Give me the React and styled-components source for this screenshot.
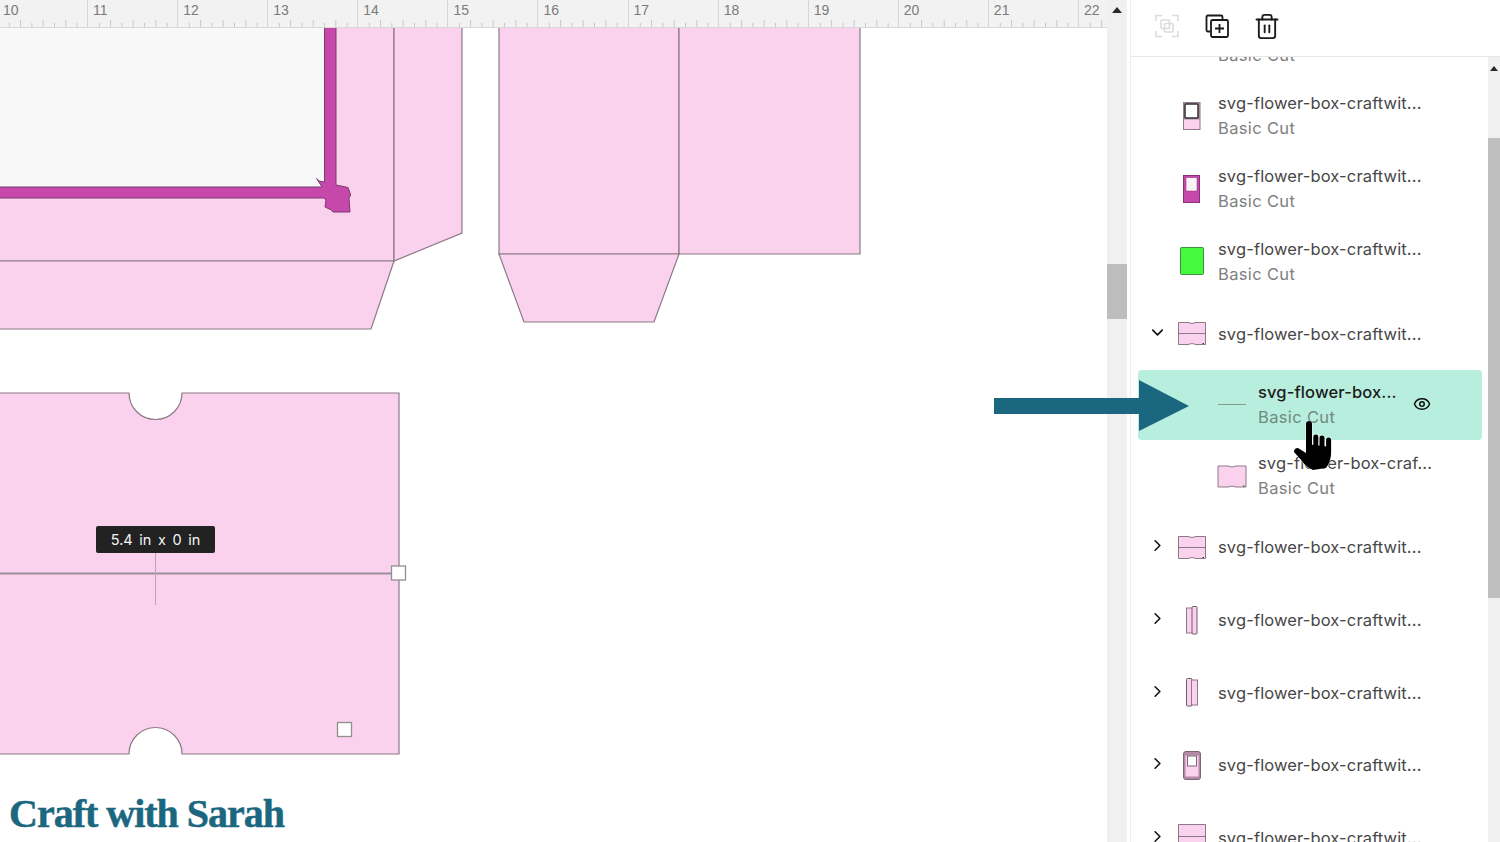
import React from 'react';
import styled, { createGlobalStyle } from 'styled-components';
import { ChevronDown, ChevronRight, Eye, Trash2 } from 'lucide-react';

const PINK = '#fbd2ee';
const EDGE = '#8b7a86';
const MAGENTA = '#c748ab';
const TEAL = '#1a677f';

const rulerLabels = [10, 11, 12, 13, 14, 15, 16, 17, 18, 19, 20, 21, 22];

const layers = [
	{ id: 0, kind: 'none', sub: true },
	{ id: 1, kind: 'windowOutline', sub: true },
	{ id: 2, kind: 'windowMagenta', sub: true },
	{ id: 3, kind: 'green', sub: true },
	{ id: 4, kind: 'notched', open: true, short: true },
	{ id: 5, kind: 'line', child: true, selected: true, name: 'svg-flower-box...', sub: true },
	{ id: 6, kind: 'notchedPlain', child: true, name: 'svg-flower-box-craf...', sub: true },
	{ id: 7, kind: 'notched', closed: true },
	{ id: 8, kind: 'narrowA', closed: true },
	{ id: 9, kind: 'narrowB', closed: true, short: true },
	{ id: 10, kind: 'windowRound', closed: true },
	{ id: 11, kind: 'sheet', closed: true },
];

const Thumb = ({ kind }) => {
	const line = { stroke: EDGE, strokeWidth: 1 };
	switch (kind) {
		case 'windowOutline':
			return (
				<svg width='30' height='30' viewBox='0 0 30 30'>
					<rect x='6.5' y='1.5' width='16.5' height='27' fill={PINK} {...line} />
					<rect x='6.5' y='1.5' width='16.5' height='17' fill='#a58a9c' />
					<rect x='8' y='3' width='13' height='14' rx='1' fill='#fff' stroke='#333' strokeWidth='1.5' />
				</svg>
			);
		case 'windowMagenta':
			return (
				<svg width='30' height='30' viewBox='0 0 30 30'>
					<rect x='6.5' y='1.5' width='16' height='27' fill={MAGENTA} stroke='#8a2f78' />
					<rect x='9' y='3.5' width='11' height='13.5' fill='#f8f2f6' stroke='#8a2f78' strokeWidth='.5' />
				</svg>
			);
		case 'green':
			return (
				<svg width='30' height='30' viewBox='0 0 30 30'>
					<rect x='3.5' y='0.5' width='23' height='27' rx='1' fill='#45f93d' stroke='#3f8f3f' />
				</svg>
			);
		case 'notched':
			return (
				<svg width='30' height='30' viewBox='0 0 30 30'>
					<path d='M1.5 3.5H11Q15 5.5 19 3.5H28.5V25.5H19Q15 23.5 11 25.5H1.5Z' fill={PINK} {...line} />
					<path d='M1.5 14.5H28.5' {...line} />
					<path d='M25.5 24.5H27' stroke='#333' />
				</svg>
			);
		case 'notchedPlain':
			return (
				<svg width='30' height='30' viewBox='0 0 30 30'>
					<path d='M1 5H11Q15 7 19 5H29V26H19Q15 24 11 26H1Z' fill={PINK} {...line} />
					<path d='M26 25H27.5' stroke='#333' />
				</svg>
			);
		case 'line':
			return (
				<svg width='30' height='30' viewBox='0 0 30 30'>
					<path d='M1 14.5H29' stroke='#7c9c90' strokeWidth='1' />
				</svg>
			);
		case 'narrowA':
			return (
				<svg width='30' height='30' viewBox='0 0 30 30'>
					<rect x='9.5' y='2' width='7' height='25' fill={PINK} {...line} />
					<rect x='15' y='0.5' width='5' height='27.5' rx='1' fill={PINK} stroke='#6d5c68' />
				</svg>
			);
		case 'narrowB':
			return (
				<svg width='30' height='30' viewBox='0 0 30 30'>
					<rect x='9.5' y='0.5' width='5.5' height='27.5' rx='1' fill={PINK} stroke='#6d5c68' />
					<rect x='14.5' y='2' width='6' height='25' fill={PINK} {...line} />
				</svg>
			);
		case 'windowRound':
			return (
				<svg width='30' height='30' viewBox='0 0 30 30'>
					<rect x='6.5' y='0.5' width='17' height='28' rx='2.5' fill='#b28aa6' stroke='#7d6475' />
					<rect x='8.5' y='4.5' width='13' height='21' fill={PINK} />
					<rect x='10.5' y='5' width='9' height='10' fill='#fff' stroke='#7d6475' />
				</svg>
			);
		case 'sheet':
			return (
				<svg width='30' height='30' viewBox='0 0 30 30'>
					<path d='M1.5 0.5H28.5V29H1.5Z' fill={PINK} {...line} />
					<path d='M1.5 12.5H28.5' {...line} />
				</svg>
			);
		default:
			return null;
	}
};

const HandCursor = () => (
	<HandSvg width='40' height='50' viewBox='0 0 40 50'>
		<g stroke='#000' strokeLinecap='round' fill='none'>
			<path d='M16 4V30' strokeWidth='6' />
			<path d='M22.8 17V30' strokeWidth='5' />
			<path d='M29 18V30' strokeWidth='5' />
			<path d='M35.6 20V32' strokeWidth='5' />
		</g>
		<path d='M13 24L38 27V35Q37 43 33 48L20 50Q13 47 9 41L1 32Q1 28 5 28L13 33Z' fill='#000' />
	</HandSvg>
);

const App = () => (
	<Page>
		<GlobalStyle />
		<CanvasArea>
			<Ruler>
				{rulerLabels.map((n) => (
					<RulerCell key={n}>
						{n}
						<RulerTicks width='91' height='8' viewBox='0 0 91 8'>
							{[11.3, 22.6, 33.9, 45.2, 56.5, 67.8, 79.1].map((x, i) => (
								<path key={x} d={`M${x} ${i % 2 ? 1 : 4}V8`} stroke='#c8c8c8' />
							))}
						</RulerTicks>
					</RulerCell>
				))}
			</Ruler>
			<Stage viewBox='0 28 1107 814' width='1107' height='814'>
				<g fill={PINK} stroke={EDGE} strokeWidth='1.2'>
					<path d='M-2 20H394V261H-2Z' />
					<path d='M394 20H462V233L394 261Z' />
					<path d='M-2 261H394L371 329H-2Z' />
					<path d='M499 20H679V254H499Z' />
					<path d='M679 20H860V254H679Z' />
					<path d='M499 254H679L654 322H524Z' />
					<path d='M-2 393H129A26.5 26.5 0 0 0 182 393H399V754H182A26.5 26.5 0 0 0 129 754H-2Z' />
				</g>
				<path d='M-2 20H330V192H-2Z' fill='#f8f8f8' />
				<path
					d='M-2 187H322L316.7 178.5L319 181L324.5 182V20H336V185L348 187.5L350.7 195L349 198L350 212L333 212L331.5 210L325 207L326 200L324 198H-2Z'
					fill={MAGENTA}
					stroke='#7b3a6c'
					strokeWidth='1'
				/>
				<path d='M-2 573.5H399' stroke='#9b8f98' strokeWidth='2' />
				<path d='M155.5 553V605' stroke='#b3a7b0' strokeWidth='1' />
				<rect x='391.5' y='566' width='14' height='14' fill='#fff' stroke='#8f8f8f' strokeWidth='1.3' />
				<rect x='337.5' y='722.5' width='14' height='14' fill='#fff' stroke='#8f8f8f' strokeWidth='1.3' />
			</Stage>
			<SizeTip>5.4 in x 0 in</SizeTip>
			<Logo>Craft with Sarah</Logo>
		</CanvasArea>
		<CanvasScrollbar>
			<ScrollArrow />
			<CanvasThumb />
		</CanvasScrollbar>
		<Panel>
			<Toolbar>
				<ToolIcon>
					<svg width='24' height='24' viewBox='0 0 24 24' fill='none' stroke='#dcdcdc' strokeWidth='1.6'>
						<path d='M1 7V1.5H7M17 1.5H23V7M23 17V22.5H17M7 22.5H1V17' />
						<rect x='6' y='6' width='8.5' height='8.5' rx='1' />
						<rect x='9.5' y='9.5' width='8.5' height='8.5' rx='1' />
					</svg>
				</ToolIcon>
				<ToolIcon>
					<svg width='24' height='24' viewBox='0 0 24 24' fill='none' stroke='#1a1a1a' strokeWidth='1.8'>
						<path d='M5 17.5H3Q1.5 17.5 1.5 16V3Q1.5 1.5 3 1.5H16Q17.5 1.5 17.5 3V5.5' />
						<rect x='6' y='6' width='17' height='17' rx='1.5' />
						<path d='M14.5 10V19M10 14.5H19' />
					</svg>
				</ToolIcon>
				<ToolIcon>
					<Trash2 size={29} color='#1a1a1a' strokeWidth={1.6} />
				</ToolIcon>
			</Toolbar>
			<PanelBody>
				<LayerList>
					<LayerStack>
						{layers.map((layer) => (
							<LayerRow key={layer.id} $child={layer.child} $short={layer.short} $selected={layer.selected}>
								<ChevronSlot>
									{layer.open && <ChevronDown size={19} color='#111' strokeWidth={2} />}
									{layer.closed && <ChevronRight size={19} color='#111' strokeWidth={2} />}
								</ChevronSlot>
								<ThumbSlot>
									<Thumb kind={layer.kind} />
								</ThumbSlot>
								<LayerText>
									<LayerName $selected={layer.selected}>{layer.name || 'svg-flower-box-craftwit...'}</LayerName>
									{layer.sub && <LayerType $selected={layer.selected}>Basic Cut</LayerType>}
								</LayerText>
								{layer.selected && (
									<EyeSlot>
										<Eye size={18} color='#111' strokeWidth={2} />
									</EyeSlot>
								)}
							</LayerRow>
						))}
					</LayerStack>
				</LayerList>
				<PanelScrollbar>
					<PanelArrow />
					<PanelThumb />
				</PanelScrollbar>
			</PanelBody>
		</Panel>
		<ArrowMark width='196' height='52' viewBox='0 0 196 52'>
			<path d='M0 18H145V0L195 26L145 51V34H0Z' fill={TEAL} />
		</ArrowMark>
		<HandCursor />
	</Page>
);

const GlobalStyle = createGlobalStyle`
	html, body {
		margin: 0;
		padding: 0;
		background: #fff;
		overflow: hidden;
	}
`;

const Page = styled.div`
	position: relative;
	display: flex;
	width: 1500px;
	height: 842px;
	overflow: hidden;
	background: #fff;
	font-family: Inter, 'Liberation Sans', sans-serif;
`;

const CanvasArea = styled.div`
	position: relative;
	width: 1107px;
	flex: none;
	overflow: hidden;
`;

const Ruler = styled.div`
	display: flex;
	height: 27px;
	margin-left: -3px;
	background: #f2f2f2;
	border-bottom: 1px solid #d9d9d9;
`;

const RulerCell = styled.div`
	position: relative;
	width: 90.08px;
	height: 27px;
	flex: none;
	box-sizing: border-box;
	padding-left: 5px;
	border-left: 1px solid #d6d6d6;
	font: 14px/20px 'Liberation Sans', sans-serif;
	color: #7a7a7a;
`;

const RulerTicks = styled.svg`
	position: absolute;
	left: 0;
	bottom: 0;
`;

const Stage = styled.svg`
	display: block;
`;

const SizeTip = styled.div`
	position: absolute;
	left: 96px;
	top: 526px;
	width: 119px;
	height: 27px;
	border-radius: 2px;
	background: #222;
	color: #f4f4f4;
	font-size: 14.5px;
	line-height: 28px;
	text-align: center;
	word-spacing: 2.5px;
`;

const Logo = styled.div`
	position: absolute;
	left: 9px;
	top: 790px;
	font: bold 40px/48px 'Liberation Serif', serif;
	letter-spacing: -1px;
	-webkit-text-stroke: 0.5px ${TEAL};
	color: ${TEAL};
	white-space: nowrap;
`;

const CanvasScrollbar = styled.div`
	width: 20px;
	flex: none;
	background: #f0f0f0;
	display: flex;
	flex-direction: column;
	align-items: center;
`;

const ScrollArrow = styled.div`
	margin-top: 7px;
	border-left: 5px solid transparent;
	border-right: 5px solid transparent;
	border-bottom: 6px solid #2a2a2a;
`;

const CanvasThumb = styled.div`
	width: 20px;
	height: 55px;
	margin-top: 251px;
	background: #bdbdbd;
`;

const Panel = styled.div`
	width: 369px;
	margin-left: 3px;
	flex: none;
	display: flex;
	flex-direction: column;
	border-left: 1px solid #ececec;
`;

const Toolbar = styled.div`
	height: 57px;
	flex: none;
	box-sizing: border-box;
	display: flex;
	align-items: center;
	gap: 22px;
	padding: 0 0 4px 22px;
	border-bottom: 1px solid #e6e6e6;
`;

const ToolIcon = styled.div`
	width: 28px;
	height: 28px;
	display: flex;
	align-items: center;
	justify-content: center;
`;

const PanelBody = styled.div`
	flex: 1;
	min-height: 0;
	display: flex;
`;

const LayerList = styled.div`
	flex: 1;
	overflow: hidden;
`;

const LayerStack = styled.div`
	margin-top: -51px;
	width: 344px;
	margin-left: 7px;
`;

const LayerRow = styled.div`
	display: flex;
	align-items: center;
	box-sizing: border-box;
	height: ${(p) => (p.$child ? 70 : p.$short ? 72 : 73)}px;
	margin-bottom: ${(p) => (p.$selected ? 1 : 0)}px;
	padding-left: ${(p) => (p.$child ? 49 : 9)}px;
	border-radius: 4px;
	background: ${(p) => (p.$selected ? '#b8eedd' : 'transparent')};
`;

const ChevronSlot = styled.div`
	width: 20px;
	margin-right: 10px;
	margin-top: -4px;
	flex: none;
	display: flex;
	justify-content: center;
`;

const ThumbSlot = styled.div`
	width: 30px;
	height: 30px;
	flex: none;
	margin-right: 11px;
`;

const LayerText = styled.div`
	flex: none;
	width: 220px;
	min-width: 0;
`;

const LayerName = styled.div`
	font-size: 16.5px;
	line-height: 25px;
	letter-spacing: 0.13px;
	font-weight: ${(p) => (p.$selected ? 500 : 400)};
	color: ${(p) => (p.$selected ? '#1c1c1c' : '#474747')};
	white-space: nowrap;
`;

const LayerType = styled.div`
	font-size: 16.5px;
	line-height: 25px;
	letter-spacing: 0.35px;
	color: ${(p) => (p.$selected ? '#6f8a80' : '#808080')};
`;

const EyeSlot = styled.div`
	margin-left: -65px;
	margin-top: -3px;
	display: flex;
`;

const PanelScrollbar = styled.div`
	width: 12px;
	flex: none;
	background: #f0f0f0;
	display: flex;
	flex-direction: column;
	align-items: center;
`;

const PanelArrow = styled.div`
	margin-top: 9px;
	border-left: 4px solid transparent;
	border-right: 4px solid transparent;
	border-bottom: 5px solid #2a2a2a;
`;

const PanelThumb = styled.div`
	width: 12px;
	height: 460px;
	margin-top: 67px;
	background: #bfbfbf;
`;

const ArrowMark = styled.svg`
	position: absolute;
	left: 994px;
	top: 380px;
`;

const HandSvg = styled.svg`
	position: absolute;
	left: 1293px;
	top: 420px;
	filter: drop-shadow(0 0 1px #fff);
`;

export default App;
